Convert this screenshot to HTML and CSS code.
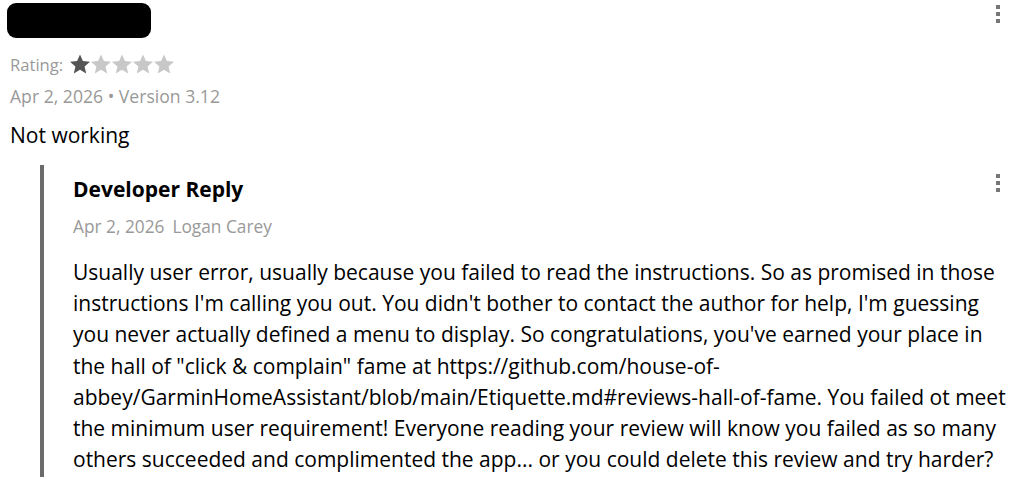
FILE: index.html
```html
<!DOCTYPE html>
<html>
<head>
<meta charset="utf-8">
<link rel="stylesheet" href="styles.css">
</head>
<body>
<div class="review">
  <div class="review-head">
    <div class="author-redacted"></div>
    <button class="kebab" aria-label="More"><span></span><span></span><span></span></button>
  </div>
  <div class="rating">
    <span class="rating-label">Rating:</span>
    <span class="stars">
      <svg class="star on" viewBox="2 2 20 20"><path d="M12 2.5l2.9 6.6 7.1.6-5.4 4.7 1.6 7-6.2-3.7-6.2 3.7 1.6-7L2 9.7l7.1-.6z"/></svg>
      <svg class="star" viewBox="2 2 20 20"><path d="M12 2.5l2.9 6.6 7.1.6-5.4 4.7 1.6 7-6.2-3.7-6.2 3.7 1.6-7L2 9.7l7.1-.6z"/></svg>
      <svg class="star" viewBox="2 2 20 20"><path d="M12 2.5l2.9 6.6 7.1.6-5.4 4.7 1.6 7-6.2-3.7-6.2 3.7 1.6-7L2 9.7l7.1-.6z"/></svg>
      <svg class="star" viewBox="2 2 20 20"><path d="M12 2.5l2.9 6.6 7.1.6-5.4 4.7 1.6 7-6.2-3.7-6.2 3.7 1.6-7L2 9.7l7.1-.6z"/></svg>
      <svg class="star" viewBox="2 2 20 20"><path d="M12 2.5l2.9 6.6 7.1.6-5.4 4.7 1.6 7-6.2-3.7-6.2 3.7 1.6-7L2 9.7l7.1-.6z"/></svg>
    </span>
  </div>
  <div class="meta">Apr 2, 2026 • Version 3.12</div>
  <div class="review-title">Not working</div>

  <div class="reply">
    <div class="reply-head">
      <div class="reply-title">Developer Reply</div>
      <button class="kebab" aria-label="More"><span></span><span></span><span></span></button>
    </div>
    <div class="reply-meta"><span>Apr 2, 2026</span><span>Logan Carey</span></div>
    <p class="reply-body">Usually user error, usually because you failed to read the instructions. So as promised in those instructions I'm calling you out. You didn't bother to contact the author for help, I'm guessing you never actually defined a menu to display. So congratulations, you've earned your place in the hall of "click &amp; complain" fame at https://github.com/house-of-abbey/GarminHomeAssistant/blob/main/Etiquette.md#reviews-hall-of-fame. You failed ot meet the minimum user requirement! Everyone reading your review will know you failed as so many others succeeded and complimented the app... or you could delete this review and try harder?</p>
  </div>
</div>
</body>
</html>
```

FILE: styles.css
```css
* { box-sizing: border-box; }
html, body { margin: 0; padding: 0; background: #fff; }
body {
  font-family: "Open Sans", "Noto Sans", sans-serif;
  color: #000;
  overflow: hidden;
}
.review { padding: 3px 6px 0 10px; }
.review-head {
  display: flex;
  justify-content: space-between;
  align-items: flex-start;
}
.author-redacted {
  width: 144px;
  height: 35px;
  background: #000;
  border-radius: 9px;
  margin-left: -3px;
}
.kebab {
  border: 0;
  background: none;
  padding: 2px 0;
  margin-right: 14px;
  display: flex;
  flex-direction: column;
  gap: 3px;
  cursor: pointer;
}
.kebab span { width: 4px; height: 4px; background: #777; display: block; }
.rating {
  display: flex;
  align-items: center;
  margin-top: 14px;
  height: 24px;
  font-size: 16.6px;
  color: #999;
}
.rating-label { margin-right: 7px; }
.stars { display: flex; gap: 1px; }
.star { width: 20px; height: 20px; fill: #c8c8c8; }
.star.on { fill: #555; }
.meta {
  margin-top: 8px;
  font-size: 17.6px;
  color: #999;
  line-height: 24px;
}
.review-title {
  margin-top: 13px;
  font-size: 21px;
  line-height: 28px;
}
.reply {
  margin: 16px 0 0 30px;
  border-left: 4px solid #6b6b6b;
  padding: 10px 0 2px 29px;
}
.reply-head {
  display: flex;
  justify-content: space-between;
  align-items: flex-start;
}
.reply-title { font-weight: 700; font-size: 21px; line-height: 28px; }
.reply-head .kebab { margin-top: -3px; }
.reply-meta {
  margin-top: 12px;
  font-size: 17.3px;
  color: #999;
  line-height: 24px;
  display: flex;
  gap: 8px;
}
.reply-body {
  margin: 18px 0 0 0;
  font-size: 21px;
  line-height: 31.2px;
}
```
